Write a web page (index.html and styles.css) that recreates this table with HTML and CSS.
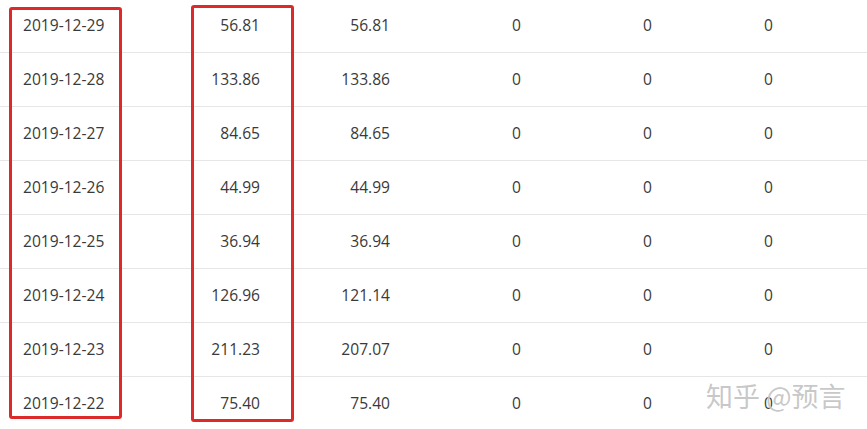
FILE: index.html
```html
<!DOCTYPE html>
<html lang="zh-CN">
<head>
<meta charset="utf-8">
<title>Table</title>
<link rel="stylesheet" href="styles.css">
</head>
<body>
<div class="page">
  <div class="table">
    <div class="row"><span class="c1">2019-12-29</span><span class="c2">56.81</span><span class="c3">56.81</span><span class="c4">0</span><span class="c5">0</span><span class="c6">0</span></div>
    <div class="row"><span class="c1">2019-12-28</span><span class="c2">133.86</span><span class="c3">133.86</span><span class="c4">0</span><span class="c5">0</span><span class="c6">0</span></div>
    <div class="row"><span class="c1">2019-12-27</span><span class="c2">84.65</span><span class="c3">84.65</span><span class="c4">0</span><span class="c5">0</span><span class="c6">0</span></div>
    <div class="row"><span class="c1">2019-12-26</span><span class="c2">44.99</span><span class="c3">44.99</span><span class="c4">0</span><span class="c5">0</span><span class="c6">0</span></div>
    <div class="row"><span class="c1">2019-12-25</span><span class="c2">36.94</span><span class="c3">36.94</span><span class="c4">0</span><span class="c5">0</span><span class="c6">0</span></div>
    <div class="row"><span class="c1">2019-12-24</span><span class="c2">126.96</span><span class="c3">121.14</span><span class="c4">0</span><span class="c5">0</span><span class="c6">0</span></div>
    <div class="row"><span class="c1">2019-12-23</span><span class="c2">211.23</span><span class="c3">207.07</span><span class="c4">0</span><span class="c5">0</span><span class="c6">0</span></div>
    <div class="row last"><span class="c1">2019-12-22</span><span class="c2">75.40</span><span class="c3">75.40</span><span class="c4">0</span><span class="c5">0</span><span class="c6">0</span></div>
  </div>
  <div class="mark mark-date"></div>
  <div class="mark mark-amount"></div>
  <div class="watermark">知乎 @预言</div>
</div>
</body>
</html>
```
FILE: styles.css
```css
* { box-sizing: border-box; }
html, body {
  margin: 0;
  padding: 0;
  background: #ffffff;
}
.page {
  position: relative;
  width: 867px;
  height: 429px;
  overflow: hidden;
  font-family: "Open Sans", "Noto Sans CJK SC", sans-serif;
  font-size: 15.6px;
  color: #3a3a3a;
}
.table {
  margin-top: -1px;
}
.row {
  display: grid;
  grid-template-columns: 150px 110px 130px 131px 131px 121px 1fr;
  align-items: center;
  height: 54px;
  padding-bottom: 2px;
  border-bottom: 1px solid #e6e6e6;
}
.row.last { border-bottom: none; }
.c1 { padding-left: 23px; text-align: left; }
.c2, .c3, .c4, .c5, .c6 { text-align: right; }
.mark {
  position: absolute;
  border: 3px solid #dc2a2a;
  border-radius: 3px;
}
.mark-date {
  left: 9px;
  top: 7px;
  width: 113px;
  height: 412px;
}
.mark-amount {
  left: 191px;
  top: 5px;
  width: 103px;
  height: 417px;
}
.watermark {
  position: absolute;
  left: 706px;
  top: 376px;
  font-family: "Noto Sans CJK SC", sans-serif;
  font-size: 27px;
  line-height: 40px;
  color: rgba(175, 175, 175, 0.7);
  text-shadow: 0 0 1px rgba(255,255,255,0.9);
  white-space: nowrap;
}
```
